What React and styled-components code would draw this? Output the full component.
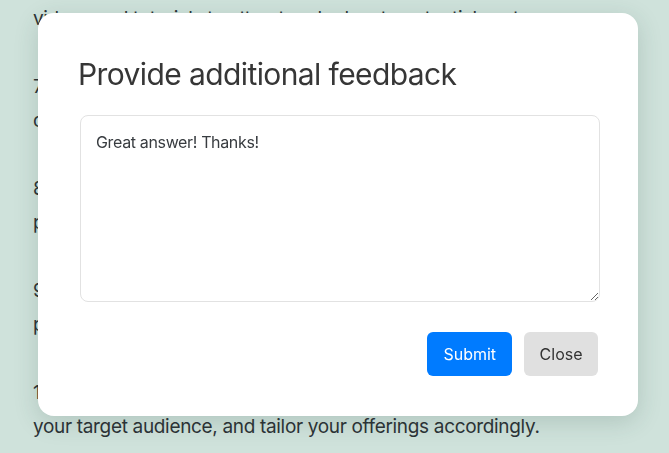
import React, { useState } from "react";
import styled, { createGlobalStyle } from "styled-components";

const GlobalStyle = createGlobalStyle`
  * {
    box-sizing: border-box;
  }

  body {
    margin: 0;
    background-color: #cfe2db;
    font-family: "Inter", "Liberation Sans", sans-serif;
    overflow: hidden;
  }
`;

const tips = [
  ["videos and tutorials to attract and educate potential customers.", ""],
  [
    "7. Collaborate with influencers or brands to reach",
    "customers who are already interested in what you offer.",
  ],
  [
    "8. Offer referral discounts to encourage clients to bring in",
    "potential new customers from their own networks.",
  ],
  [
    "9. Attend local events and trade shows to meet",
    "potential customers and partners face to face.",
  ],
  [
    "10. Research your competitors, understand the needs of",
    "your target audience, and tailor your offerings accordingly.",
  ],
];

export default function App() {
  const [feedback, setFeedback] = useState("Great answer! Thanks!");

  return (
    <>
      <GlobalStyle />
      <Page>
        {tips.map((lines, index) => (
          <Paragraph key={index}>
            {lines[0]}
            {lines[1] && <br />}
            {lines[1]}
          </Paragraph>
        ))}
      </Page>

      <Modal>
        <Title>Provide additional feedback</Title>
        <FeedbackInput
          value={feedback}
          onChange={(e) => setFeedback(e.target.value)}
        />
        <Actions>
          <Button $primary>Submit</Button>
          <Button>Close</Button>
        </Actions>
      </Modal>
    </>
  );
}

const Page = styled.div`
  height: 453px;
  overflow: hidden;
  padding: 2px 33px 0;
  color: #2c3236;
  font-size: 19px;
  letter-spacing: -0.33px;
  line-height: 34px;
  white-space: nowrap;
`;

const Paragraph = styled.p`
  margin: 0 0 34px;

  &:last-child {
    margin-bottom: 0;
  }
`;

const Modal = styled.div`
  position: fixed;
  top: 13px;
  left: 38px;
  width: 600px;
  height: 403px;
  padding: 42px 40px 40px;
  background-color: #ffffff;
  border-radius: 16px;
  box-shadow: 0 6px 24px rgba(40, 70, 60, 0.18);
  display: flex;
  flex-direction: column;
`;

const Title = styled.h2`
  margin: 0 0 22px;
  font-size: 30px;
  font-weight: 400;
  letter-spacing: -0.6px;
  color: #363636;
  line-height: 38px;
`;

const FeedbackInput = styled.textarea`
  width: 520px;
  height: 187px;
  margin-left: 2px;
  padding: 16px 15px;
  border: 1px solid #e2e2e2;
  border-radius: 8px;
  font-family: "Inter", "Liberation Sans", sans-serif;
  font-size: 16px;
  letter-spacing: -0.35px;
  color: #383c40;
  resize: vertical;
  outline: none;
`;

const Actions = styled.div`
  display: flex;
  justify-content: flex-end;
  gap: 12px;
  margin-top: 30px;
`;

const Button = styled.button`
  height: 44px;
  padding: 0 ${(p) => (p.$primary ? "16px" : "15.5px")};
  border: none;
  border-radius: 6px;
  font-family: "Inter", "Liberation Sans", sans-serif;
  font-size: 16px;
  background-color: ${(p) => (p.$primary ? "#007bff" : "#e0e0e0")};
  color: ${(p) => (p.$primary ? "#ffffff" : "#333333")};
  cursor: pointer;
`;
